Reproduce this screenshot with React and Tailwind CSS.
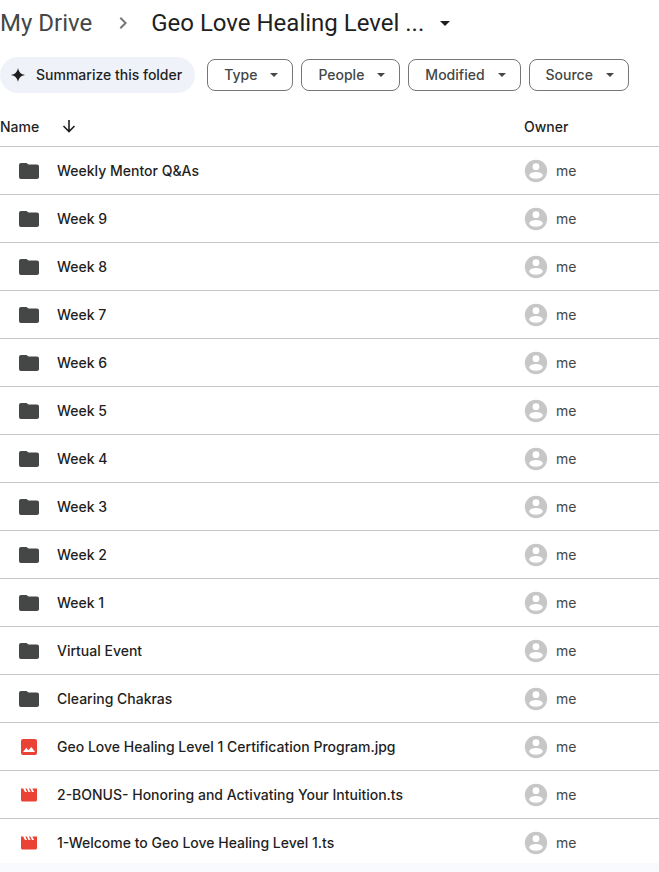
import React, { useState } from 'react';

const filters = ['Type', 'People', 'Modified', 'Source'];

const files = [
  { name: 'Weekly Mentor Q&As', kind: 'folder' },
  { name: 'Week 9', kind: 'folder' },
  { name: 'Week 8', kind: 'folder' },
  { name: 'Week 7', kind: 'folder' },
  { name: 'Week 6', kind: 'folder' },
  { name: 'Week 5', kind: 'folder' },
  { name: 'Week 4', kind: 'folder' },
  { name: 'Week 3', kind: 'folder' },
  { name: 'Week 2', kind: 'folder' },
  { name: 'Week 1', kind: 'folder' },
  { name: 'Virtual Event', kind: 'folder' },
  { name: 'Clearing Chakras', kind: 'folder' },
  { name: 'Geo Love Healing Level 1 Certification Program.jpg', kind: 'image' },
  { name: '2-BONUS- Honoring and Activating Your Intuition.ts', kind: 'video' },
  { name: '1-Welcome to Geo Love Healing Level 1.ts', kind: 'video' },
];

const Caret = ({ className }) => (
  <svg viewBox="0 0 10 5" className={className} fill="currentColor" aria-hidden="true">
    <path d="M0 0h10L5 5z" />
  </svg>
);

const FileIcon = ({ kind }) => {
  if (kind === 'folder') {
    return (
      <svg viewBox="0 0 24 24" className="size-6 shrink-0 fill-[#444746]" aria-hidden="true">
        <path d="M9.500 4H4c-1.100 0-2 .9-2 2v12c0 1.100.9 2 2 2h16c1.100 0 2-.9 2-2V7.500c0-1.100-.9-2-2-2h-8.500z" />
      </svg>
    );
  }
  if (kind === 'image') {
    return (
      <svg viewBox="0 0 24 24" className="size-6 shrink-0" aria-hidden="true">
        <rect x="4" y="4" width="16" height="16" rx="2" fill="#ea4335" />
        <path d="M6 17l3.300-4.300 2 2.600L14.500 12 18 17z" fill="#fff" />
      </svg>
    );
  }
  return (
    <svg viewBox="0 0 24 24" className="size-6 shrink-0 fill-[#ea4335]" aria-hidden="true">
      <path d="M4 5.500h2.200l1.800 3.500h2L8.300 5.500h1.500l1.700 3.500h2l-1.700-3.500h1.500l1.700 3.500h2l-1.700-3.500H20v11.500c0 .8-.7 1.500-1.500 1.500h-13c-.8 0-1.500-.7-1.500-1.500z" />
    </svg>
  );
};

const Avatar = () => (
  <svg viewBox="0 0 24 24" className="size-6 shrink-0" aria-hidden="true">
    <circle cx="12" cy="12" r="11.200" fill="#c7c7c7" />
    <circle cx="12" cy="7.700" r="3.400" fill="#fff" />
    <ellipse cx="12" cy="16.300" rx="6.800" ry="3.400" fill="#fff" />
  </svg>
);

const App = () => {
  const [ascending, setAscending] = useState(false);
  const rows = ascending ? [...files].reverse() : files;

  return (
    <div className="min-h-screen bg-[#f8fafd] font-['Inter',sans-serif] text-sm text-[#1f1f1f]">
      <div className="bg-white">
        <nav className="flex h-[46px] items-center font-['Roboto',sans-serif] text-2xl whitespace-nowrap" aria-label="Breadcrumb">
          <a href="#my-drive" className="text-[#444746]">My Drive</a>
          <svg viewBox="0 0 24 24" className="mr-4 ml-[19px] size-6 fill-[#747775]" aria-hidden="true">
            <path d="M10 6 8.600 7.400l4.600 4.600-4.600 4.600L10 18l6-6z" />
          </svg>
          <button type="button" className="flex items-center gap-4">
            Geo Love Healing Level ...
            <Caret className="h-[5px] w-[10px]" />
          </button>
        </nav>

        <div className="flex items-center gap-2 pt-[11px] pb-4 font-medium">
          <button type="button" className="mr-1 flex h-9 items-center gap-2 rounded-full bg-[#eff3f9] pr-[13px] pl-2 whitespace-nowrap">
            <svg viewBox="0 0 20 20" className="size-5" fill="currentColor" aria-hidden="true">
              <path d="M10 3c.9 4.300 2.700 6.100 7 7-4.300.9-6.100 2.700-7 7-.9-4.300-2.700-6.100-7-7 4.300-.9 6.100-2.700 7-7z" />
            </svg>
            Summarize this folder
          </button>
          {filters.map((filter) => (
            <button key={filter} type="button" className="flex h-8 items-center gap-[13px] rounded-lg border border-[#747775] pr-[14px] pl-4 text-[#444746]">
              {filter}
              <Caret className="h-1 w-2" />
            </button>
          ))}
        </div>

        <table className="w-full table-fixed border-collapse text-left">
          <thead>
            <tr className="h-[37px] border-b border-[#c4c7c5]">
              <th className="font-medium">
                <button type="button" className="flex items-center gap-5" onClick={() => setAscending(!ascending)}>
                  Name
                  <svg viewBox="0 0 20 20" className="size-5" fill="none" stroke="currentColor" strokeWidth="1.600" aria-hidden="true">
                    <path d="M10 3v11.500M4.500 9 10 14.500 15.500 9" />
                  </svg>
                </button>
              </th>
              <th className="w-[135px] font-medium">Owner</th>
            </tr>
          </thead>
          <tbody>
            {rows.map((file) => (
              <tr key={file.name} className="h-12 border-b border-[#c4c7c5] last:h-[45px] last:border-0 [&>td]:pt-0.5 last:[&>td]:pt-1">
                <td>
                  <div className="flex items-center gap-4 pl-[17px] font-medium">
                    <FileIcon kind={file.kind} />
                    <span className="truncate">{file.name}</span>
                  </div>
                </td>
                <td>
                  <div className="flex items-center gap-2 text-[#444746]">
                    <Avatar />
                    me
                  </div>
                </td>
              </tr>
            ))}
          </tbody>
        </table>
      </div>
    </div>
  );
};

export default App;
